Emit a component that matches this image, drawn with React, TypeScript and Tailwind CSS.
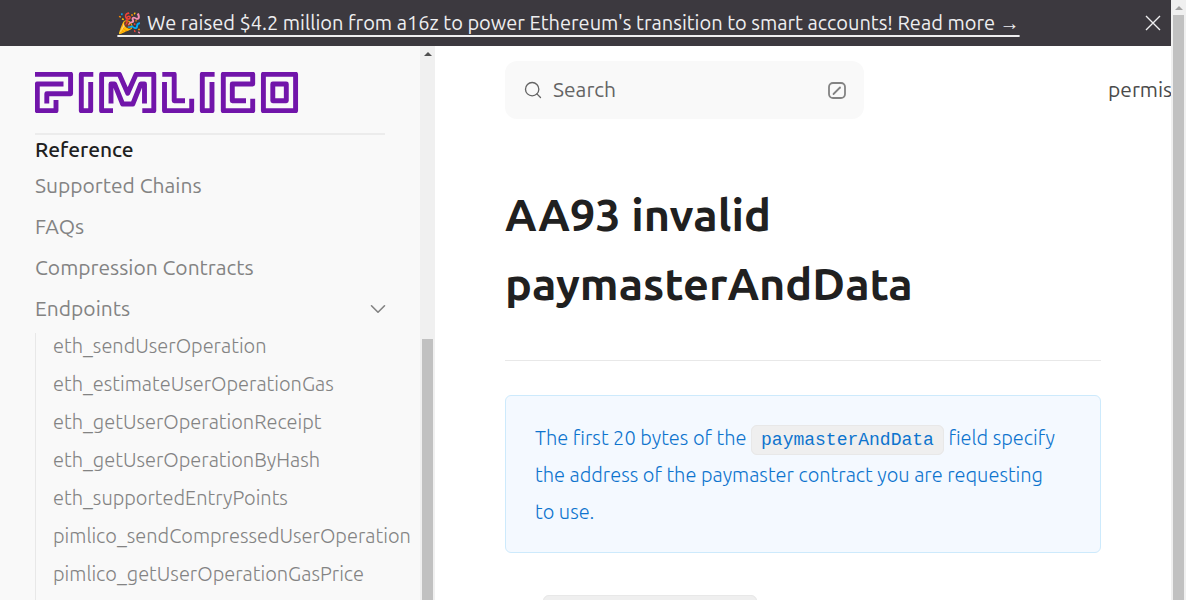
import { ChevronDown, Search } from "lucide-react";

const pages = ["Supported Chains", "FAQs", "Compression Contracts"];

const endpoints = [
  "eth_sendUserOperation",
  "eth_estimateUserOperationGas",
  "eth_getUserOperationReceipt",
  "eth_getUserOperationByHash",
  "eth_supportedEntryPoints",
  "pimlico_sendCompressedUserOperation",
  "pimlico_getUserOperationGasPrice",
];

function Logo() {
  return (
    <svg
      viewBox="35 72 264 41"
      className="block h-[41px] w-[264px]"
      fill="none"
      stroke="#7115aa"
      strokeWidth="4.9"
      strokeLinejoin="round"
      role="img"
      aria-label="Pimlico"
    >
      <path d="M35 74.3H70.6V93.7H46.8V103.5M63.5 84H37.3V110.7H56V100" />
      <path d="M93.3 74.3H81.3V110.7H90.7V82" />
      <path d="M113 110.7H101.6V74.3H119.3L127.7 93.3L136.1 74.3H153.8V110.7H142.3M111 103.5V84H114.6L122.6 104H132.8L140.8 84H144.5V103.5" />
      <path d="M162.3 74.3H174.2V100.7H185M164.5 82V110.7H191.7V98.8" />
      <path d="M214.6 74.3H202.3V110.7H212V82" />
      <path d="M246 100.7H232.3V84H252.7V74.3H223.3V110.7H252.7V98.8" />
      <path d="M263.4 74.3H295.6V110.7H263.4ZM272.8 84H286.3V100.7H272.8Z" />
    </svg>
  );
}

function Banner() {
  return (
    <div className="flex h-[46px] shrink-0 items-center gap-2 bg-[#3c393f] pr-2.5 text-[#eeeef0]">
      <p className="flex-1 text-center text-[20px] leading-6 whitespace-nowrap">
        <a href="#announcement" className="underline decoration-2 underline-offset-[5px]">
          🎉 We raised $4.2 million from a16z to power Ethereum's transition to smart accounts! Read more →
        </a>
      </p>
      <button type="button" aria-label="Dismiss banner">
        <svg viewBox="0 0 16 16" className="size-4" fill="none" stroke="currentColor" strokeWidth="1.4">
          <path d="M1 1L15 15M15 1L1 15" />
        </svg>
      </button>
    </div>
  );
}

function Sidebar() {
  return (
    <aside className="flex w-[435px] shrink-0 overflow-hidden bg-[#f9f9f9]">
      <nav className="flex min-w-0 flex-1 flex-col pt-[26px] pl-[35px] text-[#838383]">
        <a href="#home" className="block">
          <Logo />
        </a>
        <div className="mt-5 mr-[35px] border-t-2 border-[#ececec]">
          <h2 className="text-[21px] leading-[28px] font-medium text-[#202020]">Reference</h2>
          <ul className="mt-0.5 text-[21px] leading-[41px]">
            {pages.map((page) => (
              <li key={page}>
                <a href="#page">{page}</a>
              </li>
            ))}
            <li>
              <button type="button" aria-expanded="true" className="flex w-full items-center justify-between">
                Endpoints
                <ChevronDown size={26} strokeWidth={1.5} className="-mr-1.5" />
              </button>
            </li>
          </ul>
        </div>
        <ul className="mt-1 flex-1 border-l border-[#e8e8e8] pl-[17px] text-[20px] leading-[26px] font-light">
          {endpoints.map((name) => (
            <li key={name} className="pb-3">
              <a href="#endpoint">{name}</a>
            </li>
          ))}
        </ul>
      </nav>
      <div className="flex w-[15px] flex-col items-center bg-[#f0f0f0]">
        <svg viewBox="0 0 8 4" className="mt-1.5 h-1 w-2" fill="#505050">
          <path d="M4 0L8 4H0Z" />
        </svg>
        <div className="mt-[283px] w-[11px] flex-1 bg-[#c1c1c1]" />
      </div>
    </aside>
  );
}

function Content() {
  return (
    <main className="min-w-0 flex-1 overflow-hidden bg-white pl-[70px]">
      <header className="flex items-center justify-between gap-8 pt-[15px] whitespace-nowrap">
        <button
          type="button"
          className="flex h-[58px] w-[359px] shrink-0 items-center rounded-xl bg-[#f9f9f9] px-[18px] text-[21px] text-[#646464]"
        >
          <Search size={20} strokeWidth={1.6} />
          <span className="ml-2.5">Search</span>
          <svg viewBox="0 0 18 17" className="ml-auto h-[17px] w-[18px]" fill="none" stroke="#838383" strokeWidth="1.8" strokeLinecap="round">
            <rect x="1" y="1" width="16" height="15" rx="4" />
            <path d="M5.5 12L12 5.5" />
          </svg>
        </button>
        <a href="#permissionless" className="w-[63px] text-[21px] text-[#4a4a4a]">
          permissionless.js
        </a>
      </header>
      <article className="mr-[70px] pt-[61px] text-[20px] leading-[37px] font-light text-[#202020]">
        <h1 className="border-b border-[#e8e8e8] pb-[42px] text-[45px] leading-[69px] font-semibold">
          AA93 invalid paymasterAndData
        </h1>
        <aside className="mt-[34px] rounded-md border border-[#cdeafc] bg-[#f4f9ff] pt-[23px] pr-10 pb-[22px] pl-[29px] text-[#0d74ce]">
          The first 20 bytes of the{" "}
          <code className="rounded-md border border-[#e8e8e8] bg-[#efefef] px-[9px] py-1 font-['Liberation_Mono',monospace] text-[18px] leading-none font-normal">
            paymasterAndData
          </code>{" "}
          field specify the address of the paymaster contract you are requesting to use.
        </aside>
        <p className="mt-[38px]">
          The{" "}
          <code className="rounded-md border border-[#e8e8e8] bg-[#efefef] px-2.5 py-1 font-['Liberation_Mono',monospace] text-[20px] leading-none font-normal">
            paymasterAndData
          </code>{" "}
          field is of an unexpected number of bytes.
        </p>
      </article>
    </main>
  );
}

export default function App() {
  return (
    <div className="flex h-screen overflow-hidden font-['Ubuntu','Noto_Sans',sans-serif]">
      <div className="flex min-w-0 flex-1 flex-col">
        <Banner />
        <div className="flex min-h-0 flex-1">
          <Sidebar />
          <Content />
        </div>
      </div>
      <div className="flex w-[15px] shrink-0 flex-col items-center bg-[#f0f0f0]">
        <svg viewBox="0 0 8 4" className="mt-1.5 h-1 w-2" fill="#a3a3a3">
          <path d="M4 0L8 4H0Z" />
        </svg>
        <div className="mt-[5px] w-[11px] flex-1 bg-[#c1c1c1]" />
      </div>
    </div>
  );
}
